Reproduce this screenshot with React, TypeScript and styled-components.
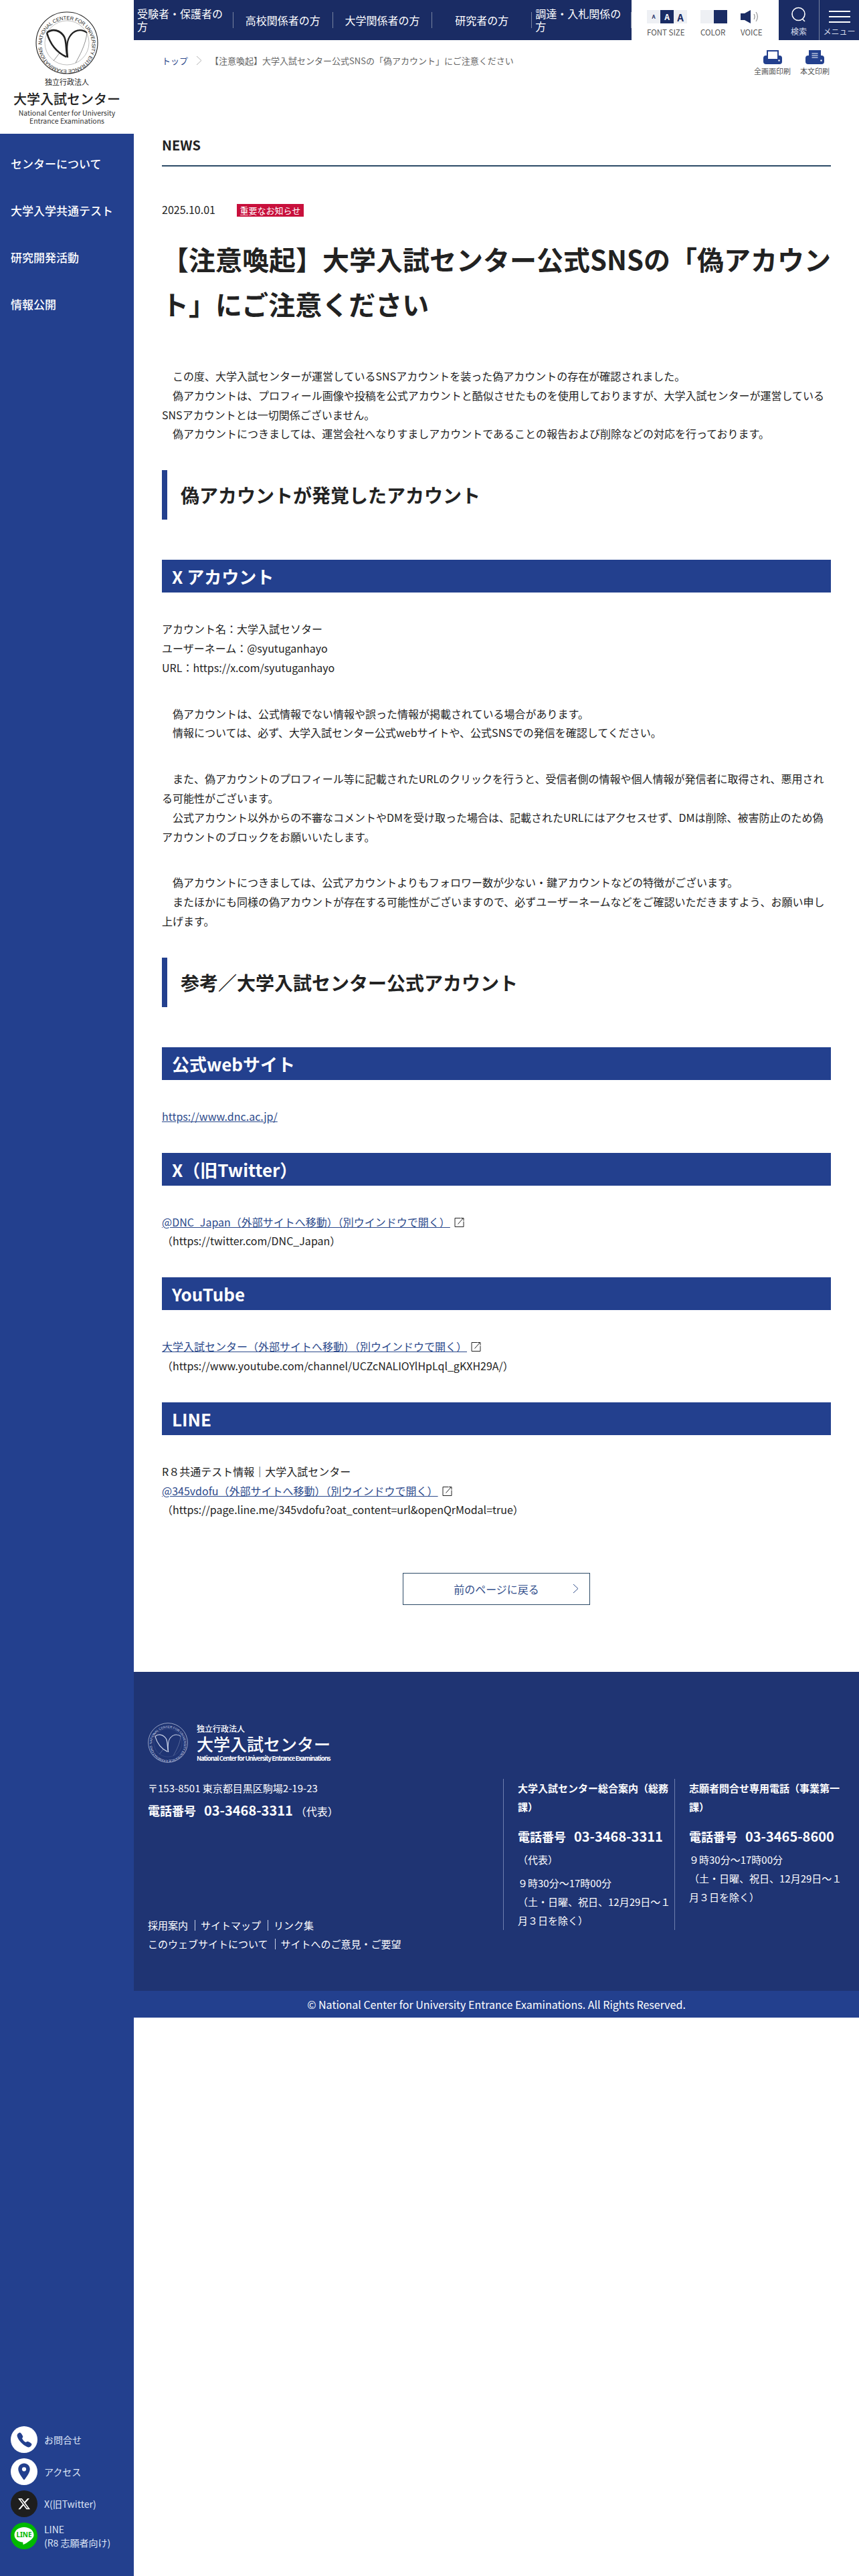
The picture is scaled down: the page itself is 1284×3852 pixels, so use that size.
import React from 'react'
import styled, { createGlobalStyle } from 'styled-components'
import { IoCall } from 'react-icons/io5'
import { MdLocationOn } from 'react-icons/md'
import { FaXTwitter } from 'react-icons/fa6'

const GlobalStyle = createGlobalStyle`
  * {
    box-sizing: border-box;
  }

  html, body {
    margin: 0;
    padding: 0;
    background: #fff;
  }

  body {
    font-family: 'Noto Sans CJK JP', 'Noto Sans', sans-serif;
    font-size: 16px;
    color: #222;
  }

  a {
    color: inherit;
    text-decoration: none;
  }

  p, h1, h2, h3, ul {
    margin: 0;
    padding: 0;
  }

  li {
    list-style: none;
  }
`

const Page = styled.div`
  display: flex;
  width: 1284px;
  min-height: 3852px;
`

/* sidebar */

const Sidebar = styled.aside`
  display: flex;
  flex-direction: column;
  flex: 0 0 200px;
  background: #23408e;
`

const LogoBox = styled.a`
  display: flex;
  flex-direction: column;
  align-items: center;
  height: 200px;
  padding-top: 17px;
  background: #fff;
  color: #222;
  text-align: center;
`

const LogoSmall = styled.span`
  margin-top: 3px;
  font-size: 11px;
  line-height: 16px;
`

const LogoName = styled.span`
  margin-top: 5px;
  font-size: 20px;
  line-height: 26px;
  font-weight: 500;
  white-space: nowrap;
`

const LogoEnglish = styled.span`
  margin-top: 2px;
  font-size: 10.5px;
  line-height: 12px;
  color: #333;
`

const SideNav = styled.ul`
  padding-top: 10px;
`

const SideNavItem = styled.li`
  height: 70px;
  padding-left: 16px;
  font-size: 17px;
  font-weight: 500;
  line-height: 70px;
  color: #fff;
`

const SideLinks = styled.ul`
  display: flex;
  flex-direction: column;
  gap: 8px;
  margin-top: auto;
  padding: 0 0 40px 16px;
`

const SideLink = styled.li`
  display: flex;
  align-items: center;
  gap: 10px;
  font-size: 14px;
  line-height: 20px;
  color: #dfe6f7;
`

const SideIcon = styled.span<{ $bg: string; $color: string }>`
  display: flex;
  align-items: center;
  justify-content: center;
  flex: 0 0 40px;
  height: 40px;
  border-radius: 50%;
  background: ${(p) => p.$bg};
  color: ${(p) => p.$color};
`

/* main column */

const Main = styled.div`
  display: flex;
  flex-direction: column;
  flex: 1;
  min-width: 0;
`

const TopBar = styled.header`
  display: flex;
  height: 60px;
`

const TopNav = styled.ul`
  display: grid;
  grid-template-columns: repeat(5, 1fr);
  align-items: center;
  flex: 0 0 744px;
  background: #1a2c64;
`

const TopNavItem = styled.li`
  display: flex;
  align-items: center;
  justify-content: center;
  height: 24px;
  padding: 0 5px;
  border-right: 1px solid #77839f;
  font-size: 16px;
  line-height: 19px;
  color: #fff;
`

const Tools = styled.div`
  display: flex;
  gap: 20px;
  flex: 0 0 220px;
  padding: 15px 0 0 23px;
  background: #fff;
`

const ToolGroup = styled.div<{ $width: number }>`
  display: flex;
  flex-direction: column;
  width: ${(p) => p.$width}px;
`

const ToolRow = styled.div`
  display: flex;
  height: 20px;
`

const FontButton = styled.span<{ $size: number; $active?: boolean }>`
  display: flex;
  align-items: center;
  justify-content: center;
  width: 20px;
  height: 20px;
  background: ${(p) => (p.$active ? '#1a2c64' : '#eef0f4')};
  color: ${(p) => (p.$active ? '#fff' : '#1a2c64')};
  font-size: ${(p) => p.$size}px;
  font-weight: 700;
  line-height: 1;
`

const Swatch = styled.span<{ $dark?: boolean }>`
  width: 20px;
  height: 20px;
  background: ${(p) => (p.$dark ? '#1a2c64' : '#eef0f4')};
`

const ToolLabel = styled.span`
  margin-top: 5px;
  font-size: 11.5px;
  line-height: 16px;
  color: #555;
  white-space: nowrap;
`

const BarButton = styled.a<{ $divided?: boolean }>`
  display: flex;
  flex-direction: column;
  align-items: center;
  flex: 0 0 60px;
  padding-top: 10px;
  background: #1a2c64;
  border-left: ${(p) => (p.$divided ? '1px solid #77839f' : 'none')};
  color: #d6dcec;
  font-size: 12px;
  line-height: 16px;
  white-space: nowrap;
`

const BarIcon = styled.span`
  display: block;
  height: 29px;
`

const MenuLines = styled.span`
  display: flex;
  flex-direction: column;
  gap: 6px;
  width: 32px;
  height: 29px;
  padding-top: 6px;

  i {
    display: block;
    height: 2px;
    background: #fff;
  }
`

const CrumbBar = styled.div`
  display: flex;
  justify-content: space-between;
  height: 133px;
  padding: 0 44px 0 42px;
`

const Crumbs = styled.ol`
  display: flex;
  align-items: center;
  gap: 12px;
  height: 20px;
  margin: 20px 0 0;
  padding: 0;
  font-size: 13px;
  color: #666;
  list-style: none;
`

const CrumbLink = styled.li`
  color: #2c4a8c;
`

const CrumbArrow = styled.li`
  display: flex;
  align-items: center;
`

const PrintLinks = styled.div`
  display: flex;
  gap: 14px;
  padding-top: 15px;
`

const PrintLink = styled.a`
  display: flex;
  flex-direction: column;
  align-items: center;
  gap: 2px;
  font-size: 11px;
  line-height: 16px;
  color: #555;
`

const Content = styled.main`
  padding: 0 42px;
`

const SectionLabel = styled.h2`
  height: 56px;
  border-bottom: 2px solid #2c4a66;
  font-size: 20px;
  font-weight: 700;
  line-height: 48px;
  color: #222;
`

const MetaRow = styled.div`
  display: flex;
  align-items: center;
  gap: 32px;
  margin-top: 52px;
  height: 24px;
`

const DateText = styled.time`
  font-size: 16px;
  line-height: 24px;
`

const Badge = styled.span`
  display: block;
  width: 100px;
  height: 19px;
  margin-top: 3px;
  background: #c8103c;
  color: #fff;
  font-size: 13px;
  line-height: 19px;
  text-align: center;
`

const Title = styled.h1`
  margin: 29px 0 60px;
  font-size: 40px;
  font-weight: 700;
  line-height: 67px;
`

const Body = styled.p`
  margin-bottom: 40px;
  font-size: 16px;
  line-height: 28.8px;
  color: #222;
`

const Heading = styled.h2`
  display: flex;
  align-items: center;
  height: 74px;
  margin-bottom: 60px;
  padding-left: 20px;
  border-left: 8px solid #23408e;
  font-size: 28px;
  font-weight: 700;
`

const SubHeading = styled.h3`
  height: 49px;
  margin-bottom: 40px;
  padding-left: 15px;
  background: #23408e;
  color: #fff;
  font-size: 26px;
  font-weight: 700;
  line-height: 49px;
`

const TextLink = styled.a`
  color: #2c4a8c;
  text-decoration: underline;
`

const ExternalIcon = styled.svg`
  margin-left: 6px;
  vertical-align: -2px;
`

const BackRow = styled.div`
  display: flex;
  justify-content: center;
  margin: 80px 0 100px;
`

const BackButton = styled.a`
  display: flex;
  align-items: center;
  justify-content: center;
  position: relative;
  width: 280px;
  height: 48px;
  border: 1px solid #2c4a66;
  color: #34508c;
  font-size: 16px;
`

const BackArrow = styled.span`
  display: flex;
  position: absolute;
  right: 16px;
  top: 15px;
`

/* footer */

const Footer = styled.footer`
  height: 477px;
  padding: 76px 20px 0 21px;
  background: #1f3473;
  color: #fff;
`

const FooterLogo = styled.a`
  display: flex;
  align-items: center;
  gap: 13px;
  height: 60px;
  margin-bottom: 24px;
`

const FooterLogoText = styled.span`
  display: flex;
  flex-direction: column;
`

const FooterLogoSmall = styled.span`
  font-size: 12px;
  line-height: 15px;
  font-weight: 500;
`

const FooterLogoName = styled.span`
  font-size: 25px;
  line-height: 30px;
  font-weight: 500;
  white-space: nowrap;
`

const FooterLogoEnglish = styled.span`
  font-size: 9.5px;
  line-height: 14px;
  font-weight: 700;
  letter-spacing: -0.95px;
  white-space: nowrap;
`

const FooterGrid = styled.div`
  display: grid;
  grid-template-columns: 531px 256px 256px;
  align-items: start;
`

const FooterLeft = styled.div`
  display: flex;
  flex-direction: column;
  justify-content: space-between;
  height: 261px;
`

const FooterText = styled.p`
  font-size: 15px;
  line-height: 28px;
`

const PhoneLine = styled.p`
  margin-top: 5px;
  font-size: 18px;
  font-weight: 700;
  line-height: 28px;
  white-space: nowrap;
`

const PhoneNumber = styled.span`
  margin-left: 12px;
  font-size: 20px;
`

const PhoneNote = styled.span`
  margin-left: 4px;
  font-size: 16px;
  font-weight: 400;
`

const FooterLinks = styled.ul`
  display: flex;
  flex-wrap: wrap;
  width: 400px;
  font-size: 15px;
  line-height: 28px;
`

const FooterLinkItem = styled.li<{ $first?: boolean }>`
  display: flex;
  align-items: center;

  &::before {
    content: '';
    display: ${(p) => (p.$first ? 'none' : 'block')};
    width: 1px;
    height: 16px;
    margin: 0 8px 0 10px;
    background: #c9d1e6;
  }
`

const LinkBreak = styled.li`
  flex-basis: 100%;
  height: 0;
`

const ContactColumn = styled.div`
  height: 226px;
  padding: 0 4px 0 21px;
  border-left: 1px solid #6f7fae;
`

const ContactTitle = styled.h3`
  font-size: 15px;
  font-weight: 700;
  line-height: 28px;
`

const ContactPhone = styled.p`
  margin-top: 16px;
  font-size: 18px;
  font-weight: 700;
  line-height: 28px;
  white-space: nowrap;
`

const ContactHours = styled.p`
  margin-top: 7px;
  font-size: 15px;
  line-height: 28px;
`

const Copyright = styled.div`
  height: 40px;
  background: #23408e;
  color: #fff;
  font-size: 16px;
  line-height: 40px;
  text-align: center;
`

/* drawings */

const Emblem: React.FC<{ id: string; size: number; color: string; thin?: boolean }> = ({
  id,
  size,
  color,
  thin,
}) => (
  <svg width={size} height={size} viewBox="0 0 94 94" fill="none">
    <circle cx="47" cy="47" r="46" stroke={color} strokeWidth="1.1" />
    <path id={id} d="M9.5 50a37.5 37.5 0 1 1 75 0a37.5 37.5 0 1 1-75 0" />
    <text fontSize="7.6" fill={color} fontFamily="'Liberation Sans', sans-serif">
      <textPath href={`#${id}`} textLength="232">
        NATIONAL CENTER FOR UNIVERSITY ENTRANCE EXAMINATIONS
      </textPath>
    </text>
    <circle cx="47" cy="47" r="33" stroke={color} strokeWidth={thin ? 0.2 : 0.3} />
    <path
      d="M17 32C26 25 37 28 43 38C47 46 45 58 48 69M17 32C21 46 29 60 46 68"
      stroke={color}
      strokeWidth={thin ? 2 : 2.6}
    />
    <path d="M77 32C68 25 57 28 51 38C46 46 47 58 48 69" stroke={color} strokeWidth={thin ? 1.6 : 2.2} />
    <path d="M77 32C75 50 66 66 60 77M37 61L27 74" stroke={color} strokeWidth="0.5" />
  </svg>
)

const External = () => (
  <ExternalIcon width="15" height="16" viewBox="0 0 15 16" fill="none" stroke="#222" strokeWidth="1">
    <path d="M9 1.5H1v13h13V6.5" />
    <path d="M5.5 10.5L13.5 1.5M9.5 1.5h4.5v4" />
  </ExternalIcon>
)

const Printer: React.FC<{ sheet?: boolean }> = ({ sheet }) => (
  <svg width="28" height="21" viewBox="0 0 28 21">
    <rect x="0" y="8" width="28" height="13" rx="4" fill="#23408e" />
    <rect x="6" y="1" width="16" height="13" fill={sheet ? '#23408e' : '#fff'} stroke="#23408e" strokeWidth="2" />
    {sheet && <path d="M9.5 5h9M9.5 8h9M9.5 11h9" stroke="#fff" strokeWidth="1.2" />}
    <circle cx="23.5" cy="15.5" r="1.2" fill="#fff" />
  </svg>
)

const Speaker = () => (
  <svg width="28" height="20" viewBox="0 0 28 20" fill="none">
    <path d="M0 5h6l9-5v20l-9-5H0z" fill="#1a2c64" />
    <path d="M20 6c1.5 2.5 1.5 5.500 0 8M23 3c3 4.500 3 9.500 0 14" stroke="#555" strokeWidth="0.8" />
  </svg>
)

const LineIcon = () => (
  <svg width="32" height="32" viewBox="0 0 32 32">
    <path d="M16 3C7.700 3 1.500 8 1.500 14.500C1.500 20.500 7 25 14 25.500C14.800 26 14 29 15 29C17 28.500 26 23 29 19C30 17.700 30.500 16 30.500 14.500C30.500 8 24.300 3 16 3Z" fill="#fff" />
    <text x="16" y="18" textAnchor="middle" fontSize="10" fontWeight="700" fill="#00b900" fontFamily="'Noto Sans', sans-serif">
      LINE
    </text>
  </svg>
)

const Chevron: React.FC<{ color: string }> = ({ color }) => (
  <svg width="9" height="15" viewBox="0 0 9 15" fill="none" stroke={color} strokeWidth="1">
    <path d="M1 1l7 6.500l-7 6.500" />
  </svg>
)

const navItems = ['受験者・保護者の方', '高校関係者の方', '大学関係者の方', '研究者の方', '調達・入札関係の方']
const sideItems = ['センターについて', '大学入学共通テスト', '研究開発活動', '情報公開']

const App: React.FC = () => {
  return (
    <Page>
      <GlobalStyle />

      <Sidebar>
        <LogoBox href="#">
          <Emblem id="emblem-top" size={94} color="#222" />
          <LogoSmall>独立行政法人</LogoSmall>
          <LogoName>大学入試センター</LogoName>
          <LogoEnglish>
            National Center for University
            <br />
            Entrance Examinations
          </LogoEnglish>
        </LogoBox>

        <SideNav>
          {sideItems.map((item) => (
            <SideNavItem key={item}>{item}</SideNavItem>
          ))}
        </SideNav>

        <SideLinks>
          <SideLink>
            <SideIcon $bg="#fff" $color="#23408e">
              <IoCall size={25} />
            </SideIcon>
            お問合せ
          </SideLink>
          <SideLink>
            <SideIcon $bg="#fff" $color="#23408e">
              <MdLocationOn size={30} />
            </SideIcon>
            アクセス
          </SideLink>
          <SideLink>
            <SideIcon $bg="#1e1e1e" $color="#fff">
              <FaXTwitter size={20} />
            </SideIcon>
            X(旧Twitter)
          </SideLink>
          <SideLink>
            <SideIcon $bg="#00b900" $color="#fff">
              <LineIcon />
            </SideIcon>
            <span>
              LINE
              <br />
              (R8 志願者向け)
            </span>
          </SideLink>
        </SideLinks>
      </Sidebar>

      <Main>
        <TopBar>
          <TopNav>
            {navItems.map((item) => (
              <TopNavItem key={item}>{item}</TopNavItem>
            ))}
          </TopNav>

          <Tools>
            <ToolGroup $width={60}>
              <ToolRow>
                <FontButton $size={8}>A</FontButton>
                <FontButton $size={12} $active>
                  A
                </FontButton>
                <FontButton $size={15}>A</FontButton>
              </ToolRow>
              <ToolLabel>FONT SIZE</ToolLabel>
            </ToolGroup>
            <ToolGroup $width={40}>
              <ToolRow>
                <Swatch />
                <Swatch $dark />
              </ToolRow>
              <ToolLabel>COLOR</ToolLabel>
            </ToolGroup>
            <ToolGroup $width={32}>
              <ToolRow>
                <Speaker />
              </ToolRow>
              <ToolLabel>VOICE</ToolLabel>
            </ToolGroup>
          </Tools>

          <BarButton href="#">
            <BarIcon>
              <svg width="24" height="24" viewBox="0 0 24 24" fill="none" stroke="#fff" strokeWidth="1.6">
                <circle cx="11.500" cy="11" r="9.500" />
                <path d="M17 18l4 4" />
              </svg>
            </BarIcon>
            検索
          </BarButton>
          <BarButton href="#" $divided>
            <MenuLines>
              <i />
              <i />
              <i />
            </MenuLines>
            メニュー
          </BarButton>
        </TopBar>

        <CrumbBar>
          <Crumbs>
            <CrumbLink>トップ</CrumbLink>
            <CrumbArrow>
              <Chevron color="#b5b5b5" />
            </CrumbArrow>
            <li>【注意喚起】大学入試センター公式SNSの「偽アカウント」にご注意ください</li>
          </Crumbs>
          <PrintLinks>
            <PrintLink href="#">
              <Printer />
              全画面印刷
            </PrintLink>
            <PrintLink href="#">
              <Printer sheet />
              本文印刷
            </PrintLink>
          </PrintLinks>
        </CrumbBar>

        <Content>
          <SectionLabel>NEWS</SectionLabel>

          <MetaRow>
            <DateText>2025.10.01</DateText>
            <Badge>重要なお知らせ</Badge>
          </MetaRow>

          <Title>【注意喚起】大学入試センター公式SNSの「偽アカウント」にご注意ください</Title>

          <Body>
            {'　この度、大学入試センターが運営しているSNSアカウントを装った偽アカウントの存在が確認されました。'}
            <br />
            {'　偽アカウントは、プロフィール画像や投稿を公式アカウントと酷似させたものを使用しておりますが、大学入試センターが運営しているSNSアカウントとは一切関係ございません。'}
            <br />
            {'　偽アカウントにつきましては、運営会社へなりすましアカウントであることの報告および削除などの対応を行っております。'}
          </Body>

          <Heading>偽アカウントが発覚したアカウント</Heading>

          <SubHeading>X アカウント</SubHeading>

          <Body>
            アカウント名：大学入試セソター
            <br />
            ユーザーネーム：@syutuganhayo
            <br />
            URL：https://x.com/syutuganhayo
          </Body>

          <Body>
            {'　偽アカウントは、公式情報でない情報や誤った情報が掲載されている場合があります。'}
            <br />
            {'　情報については、必ず、大学入試センター公式webサイトや、公式SNSでの発信を確認してください。'}
          </Body>

          <Body>
            {'　また、偽アカウントのプロフィール等に記載されたURLのクリックを行うと、受信者側の情報や個人情報が発信者に取得され、悪用される可能性がございます。'}
            <br />
            {'　公式アカウント以外からの不審なコメントやDMを受け取った場合は、記載されたURLにはアクセスせず、DMは削除、被害防止のため偽アカウントのブロックをお願いいたします。'}
          </Body>

          <Body>
            {'　偽アカウントにつきましては、公式アカウントよりもフォロワー数が少ない・鍵アカウントなどの特徴がございます。'}
            <br />
            {'　またほかにも同様の偽アカウントが存在する可能性がございますので、必ずユーザーネームなどをご確認いただきますよう、お願い申し上げます。'}
          </Body>

          <Heading>参考／大学入試センター公式アカウント</Heading>

          <SubHeading>公式webサイト</SubHeading>
          <Body>
            <TextLink href="#">https://www.dnc.ac.jp/</TextLink>
          </Body>

          <SubHeading>X（旧Twitter）</SubHeading>
          <Body>
            <TextLink href="#">@DNC_Japan（外部サイトへ移動）（別ウインドウで開く）</TextLink>
            <External />
            <br />
            （https://twitter.com/DNC_Japan）
          </Body>

          <SubHeading>YouTube</SubHeading>
          <Body>
            <TextLink href="#">大学入試センター（外部サイトへ移動）（別ウインドウで開く）</TextLink>
            <External />
            <br />
            （https://www.youtube.com/channel/UCZcNALIOYlHpLql_gKXH29A/）
          </Body>

          <SubHeading>LINE</SubHeading>
          <Body>
            R８共通テスト情報｜大学入試センター
            <br />
            <TextLink href="#">@345vdofu（外部サイトへ移動）（別ウインドウで開く）</TextLink>
            <External />
            <br />
            （https://page.line.me/345vdofu?oat_content=url&amp;openQrModal=true）
          </Body>

          <BackRow>
            <BackButton href="#">
              前のページに戻る
              <BackArrow>
                <Chevron color="#34508c" />
              </BackArrow>
            </BackButton>
          </BackRow>
        </Content>

        <Footer>
          <FooterLogo href="#">
            <Emblem id="emblem-foot" size={60} color="#c9d1e6" thin />
            <FooterLogoText>
              <FooterLogoSmall>独立行政法人</FooterLogoSmall>
              <FooterLogoName>大学入試センター</FooterLogoName>
              <FooterLogoEnglish>National Center for University Entrance Examinations</FooterLogoEnglish>
            </FooterLogoText>
          </FooterLogo>

          <FooterGrid>
            <FooterLeft>
              <div>
                <FooterText>〒153-8501 東京都目黒区駒場2-19-23</FooterText>
                <PhoneLine>
                  電話番号<PhoneNumber>03-3468-3311</PhoneNumber>
                  <PhoneNote>（代表）</PhoneNote>
                </PhoneLine>
              </div>
              <FooterLinks>
                <FooterLinkItem $first>採用案内</FooterLinkItem>
                <FooterLinkItem>サイトマップ</FooterLinkItem>
                <FooterLinkItem>リンク集</FooterLinkItem>
                <LinkBreak />
                <FooterLinkItem $first>このウェブサイトについて</FooterLinkItem>
                <FooterLinkItem>サイトへのご意見・ご要望</FooterLinkItem>
              </FooterLinks>
            </FooterLeft>

            <ContactColumn>
              <ContactTitle>大学入試センター総合案内（総務課）</ContactTitle>
              <ContactPhone>
                電話番号<PhoneNumber>03-3468-3311</PhoneNumber>
              </ContactPhone>
              <ContactHours>（代表）</ContactHours>
              <ContactHours>
                ９時30分～17時00分
                <br />
                （土・日曜、祝日、12月29日～１月３日を除く）
              </ContactHours>
            </ContactColumn>

            <ContactColumn>
              <ContactTitle>志願者問合せ専用電話（事業第一課）</ContactTitle>
              <ContactPhone>
                電話番号<PhoneNumber>03-3465-8600</PhoneNumber>
              </ContactPhone>
              <ContactHours>
                ９時30分～17時00分
                <br />
                （土・日曜、祝日、12月29日～１月３日を除く）
              </ContactHours>
            </ContactColumn>
          </FooterGrid>
        </Footer>

        <Copyright>© National Center for University Entrance Examinations. All Rights Reserved.</Copyright>
      </Main>
    </Page>
  )
}

export default App
